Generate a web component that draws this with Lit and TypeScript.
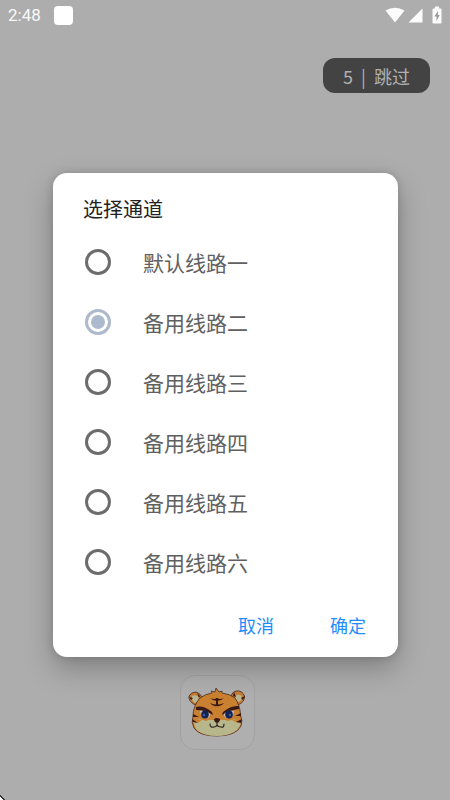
import { LitElement, html, css } from "lit";
import { customElement, state } from "lit/decorators.js";

@customElement("status-bar")
class StatusBar extends LitElement {
  static styles = css`
    :host { display: flex; align-items: center; justify-content: space-between; height: 30px; padding: 0 8px; color: #f8f8f8; }
    .group { display: flex; align-items: center; gap: 13px; }
    .time { font: 17px/20px Roboto, sans-serif; }
    .app { width: 19px; height: 19px; border-radius: 4px; background: #fff; }
    svg { display: block; fill: #fcfcfc; }
    .signals { gap: 3px; }
    .battery { margin-left: 6px; }
  `;
  render() {
    return html`
      <div class="group"><span class="time">2:48</span><span class="app"></span></div>
      <div class="group signals">
        <svg width="20" height="16" viewBox="0 0 20 16"><path d="M0.5 3.5Q10-1.8 19.5 3.5L10 15.5Z" /></svg>
        <svg width="15" height="15" viewBox="0 0 15 15"><path d="M14.5 0.5V14.5H0.5Z" /></svg>
        <svg class="battery" width="10" height="18" viewBox="0 0 10 18">
          <path d="M3 0.5h4v2h1.5q1 0 1 1V16.5q0 1-1 1H1.5q-1 0-1-1V3.5q0-1 1-1H3Z" />
          <path d="M6 4.8L2.4 10.4H4.5V15L7.7 9H5.8Z" fill="#999" />
        </svg>
      </div>`;
  }
}

@customElement("tiger-logo")
class TigerLogo extends LitElement {
  static styles = css`
    :host { display: flex; align-items: center; justify-content: center; box-sizing: border-box; width: 75px; height: 75px; border: 1px solid #a2a2a2; border-radius: 15px; background: #afafaf; }
    svg { display: block; }
  `;
  render() {
    return html`
      <svg width="58" height="50" viewBox="0 0 58 50" role="img" aria-label="Tiger">
        <g stroke="#4a2c22" stroke-width="0.8" stroke-linejoin="round">
          <path d="M7 17Q0 13 1 8Q3 4 8 4Q12 5 14 9Z" fill="#c47c32" />
          <path d="M50 17Q57 14 56.5 8Q54 2 48 3Q44 4 43 8Z" fill="#c47c32" />
          <path d="M7 15Q3 12 4 8Q8 6 11 9L10 13Z" fill="#b9b58f" stroke="none" />
          <path d="M50 14Q55 12 53.5 8Q51 5 47 8L48 12Z" fill="#b9b58f" stroke="none" />
          <path d="M12 10Q17 6 24 5L23 3L27 4L28 0L31 4L34 3L34 5Q42 6 47 10Q52 17 52.5 27Q55 33 53 38Q48 48 29 48Q11 48 6 40Q3 35 5 28Q5 18 12 10Z" fill="#c98031" />
        </g>
        <path d="M6 33Q11 30 18 33Q22 31 25 32H33Q36 31 40 33Q47 30 53 33Q52 41 46 44Q39 48 29 48Q17 48 10 43Q6 39 6 33Z" fill="#b8b68b" />
        <path d="M5 32Q7 38 14 32Z" fill="#c98031" />
        <path d="M53 32Q51 37 44 32Z" fill="#c98031" />
        <g fill="#3a1814">
          <path d="M8 19Q15 17 24 24L25 27Q17 22 8 22Z" />
          <path d="M51 18Q43 17 35 24L34 27Q43 22 51 21Z" />
          <path d="M22 10Q26 12 29 10Q32 12 36 10Q33 13 29 13Q25 13 22 10Z" />
          <path d="M22 15Q29 18 36 15Q33 19 29 18Q25 19 22 15Z" />
          <path d="M28 10H30L30 18H28Z" />
          <path d="M5 26L11 29L5 29ZM4 31L10 35L5 34ZM53 25L47 28L53 28ZM54 31L48 34L53 35Z" />
          <path d="M9 5L12 8L11 10ZM46 4L45 8L48 9ZM1 9L5 10L3 12ZM57 8L53 10L55 12Z" />
          <path d="M26 31Q29 29 32 31Q32 34 29 35Q26 34 26 31Z" />
        </g>
        <path d="M12 23Q18 22 22 26Q22 31 17 30Q13 29 12 23Z" fill="#c2c5c7" />
        <path d="M46 23Q40 22 36 26Q36 31 41 30Q45 29 46 23Z" fill="#c2c5c7" />
        <ellipse cx="17" cy="26.500" rx="3.800" ry="4" fill="#142355" />
        <ellipse cx="41" cy="26.500" rx="3.800" ry="4" fill="#142355" />
        <circle cx="16" cy="27" r="1.200" fill="#40629a" />
        <circle cx="42" cy="27" r="1.200" fill="#40629a" />
        <path d="M29 35V38M22 36Q22 40 26 39Q28 39 29 37Q30 39 33 39Q36 40 36 36" fill="none" stroke="#302a28" stroke-width="1.2" stroke-linecap="round" />
      </svg>`;
  }
}

@customElement("app-root")
class AppRoot extends LitElement {
  @state() selected = 1;
  private routes = ["默认线路一", "备用线路二", "备用线路三", "备用线路四", "备用线路五", "备用线路六"];

  static styles = css`
    :host { display: flex; flex-direction: column; position: relative; min-height: 100vh; background: #adadad; font-family: "Noto Sans CJK SC", sans-serif; }
    button { border: 0; font: inherit; cursor: pointer; }
    .top { display: flex; justify-content: flex-end; padding: 28px 20px; }
    .skip { display: flex; align-items: center; justify-content: center; gap: 8px; width: 107px; height: 35px; padding: 0; border-radius: 12px; background: #434343; color: #b0b0b0; font-size: 18px; line-height: 24px; }
    .brand { display: flex; justify-content: center; margin-top: auto; padding-bottom: 50px; padding-right: 16px; }
    .corner { position: absolute; left: 0; bottom: 0; width: 5px; height: 5px; background: linear-gradient(45deg, #fff 35%, #333 40%, #333 55%, transparent 60%); }
    .overlay { position: absolute; inset: 30px 0 0; display: flex; align-items: center; justify-content: center; padding: 0 52px 0 53px; }
    .dialog { box-sizing: border-box; width: 100%; max-width: 400px; padding: 24px 16px 12px 30px; border-radius: 14px; background: #fff; box-shadow: 0 12px 28px rgba(0, 0, 0, 0.25), 0 0 8px rgba(0, 0, 0, 0.15); }
    h1 { margin: 0 0 11px; color: #222; font-size: 20px; line-height: 24px; font-weight: 400; }
    fieldset { margin: 0; padding: 0; border: 0; }
    .route { display: flex; align-items: center; gap: 32px; height: 60px; padding-left: 2px; color: #606060; font-size: 21px; line-height: 26px; }
    .route input { appearance: none; display: grid; place-items: center; box-sizing: border-box; flex: none; width: 26px; height: 26px; margin: 0; border: 3px solid #6c6c6c; border-radius: 50%; }
    .route input:checked { border-color: #adb9cd; }
    .route input:checked::before { content: ""; width: 14px; height: 14px; border-radius: 50%; background: #adb9cd; }
    .actions { display: flex; justify-content: flex-end; gap: 24px; padding-top: 13px; }
    .actions button { height: 40px; padding: 0 16px; background: none; color: #1f8dfa; font-size: 18px; line-height: 24px; }
  `;

  render() {
    return html`
      <status-bar></status-bar>
      <div class="top"><button class="skip"><span>5</span><span>|</span><span>跳过</span></button></div>
      <div class="brand"><tiger-logo></tiger-logo></div>
      <div class="corner"></div>
      <div class="overlay">
        <form class="dialog" role="dialog" aria-labelledby="title" @submit=${(e: Event) => e.preventDefault()}>
          <h1 id="title">选择通道</h1>
          <fieldset aria-labelledby="title">
            ${this.routes.map((name, i) => html`
              <label class="route">
                <input type="radio" name="route" .checked=${i === this.selected} @change=${() => (this.selected = i)} />
                <span>${name}</span>
              </label>`)}
          </fieldset>
          <div class="actions">
            <button type="button">取消</button>
            <button type="submit">确定</button>
          </div>
        </form>
      </div>`;
  }
}
